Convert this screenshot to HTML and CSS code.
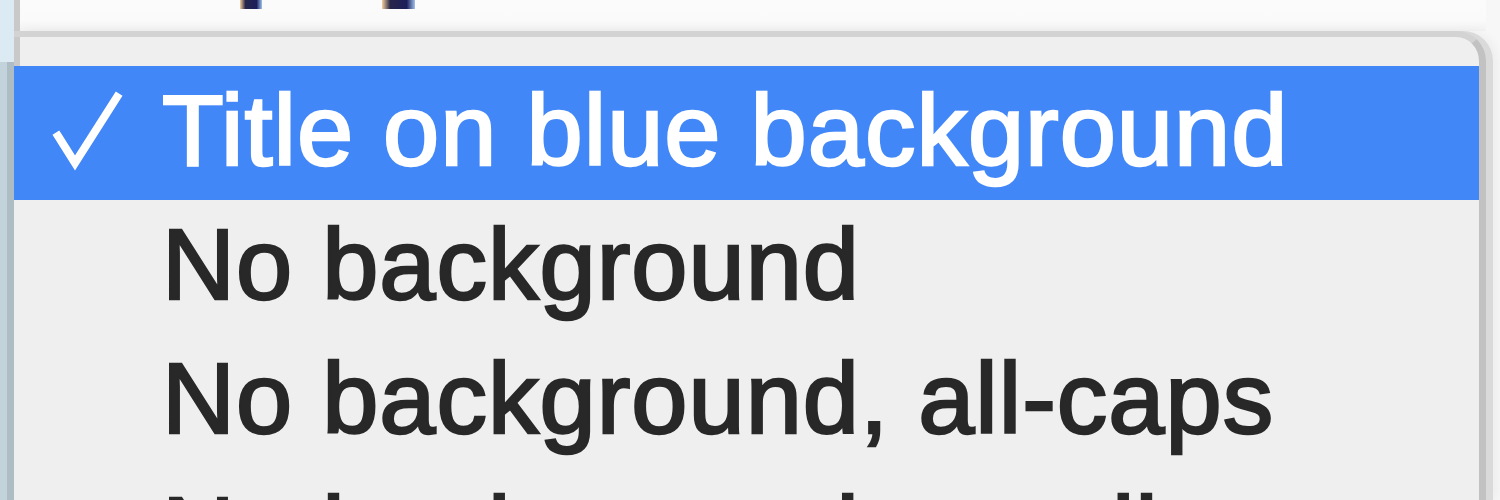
FILE: index.html
```html
<!DOCTYPE html>
<html lang="en">

<head>
    <meta charset="UTF-8">
    <meta name="viewport" content="width=device-width, initial-scale=1.0">
    <title>Header style menu</title>

    <link rel="stylesheet" href="styles.css">
</head>

<body>

    <div class="screen">
        <div class="window-edge"></div>

        <div class="panel">
            <!-- popup button the menu drops down from; only the glyph tails show -->
            <div class="field">
                <span class="tail tail-y"></span>
                <span class="tail tail-p"></span>
            </div>

            <div class="menu">
                <div class="menu-top"></div>

                <div class="item selected">
                    <span class="check">
                        <svg width="148" height="128" viewBox="0 0 148 128">
                            <path d="M44 70 L61 97 L103 31" fill="none" stroke="#fff" stroke-width="8"
                                stroke-linecap="square" stroke-linejoin="miter" />
                        </svg>
                    </span>
                    <span class="label">Title on blue background</span>
                </div>
                <div class="item">
                    <span class="check"></span>
                    <span class="label">No background</span>
                </div>
                <div class="item">
                    <span class="check"></span>
                    <span class="label">No background, all-caps</span>
                </div>
                <div class="item">
                    <span class="check"></span>
                    <span class="label">No background, small caps</span>
                </div>
            </div>
        </div>
    </div>

</body>

</html>
```

FILE: styles.css
```css
html,
body {
    margin: 0;
    padding: 0;
    height: 100%;
    overflow: hidden;
}

body {
    font-family: 'Liberation Sans', Arial, sans-serif;
    background-color: #f7f7f7;
}

.screen {
    display: flex;
    height: 500px;
}

/* window behind the menu, showing at the left */
.window-edge {
    width: 14px;
    flex-shrink: 0;
    background:
        linear-gradient(to bottom, #dcebf3 0, #dcebf3 62px, transparent 62px),
        linear-gradient(to right, #c2d3db 7px, #aebdc4 7px);
}

.panel {
    width: 1472px;
    display: flex;
    flex-direction: column;
}

.field {
    height: 31px;
    display: flex;
    border-left: 6px solid #c9c9c9;
    background: linear-gradient(to bottom, #fbfbfb 0, #fafafa 20px, #f1f1f1 31px);
}

.tail {
    display: block;
    height: 9px;
    background: linear-gradient(to right, #f3cf9c, #27264a 25%, #1c1f5a 75%, #9fc2ec);
}

.tail-y {
    width: 22px;
    margin-left: 220px;
}

.tail-p {
    width: 33px;
    margin-left: 120px;
}

.menu {
    flex: 1;
    background-color: #efefef;
    border-top: 6px solid #d3d3d3;
    border-right: 7px solid #c2c2c2;
    border-top-right-radius: 30px;
    box-shadow: 7px 0 0 #dadada, 12px 0 10px rgba(0, 0, 0, 0.04);
    overflow: hidden;
}

.menu-top {
    height: 29px;
    width: 6px;
    background-color: #c9c9c9;
}

.item {
    display: flex;
    height: 134px;
    line-height: 128px;
    padding-bottom: 6px;
    box-sizing: border-box;
    font-size: 101px;
    letter-spacing: 1px;
    color: #282828;
    -webkit-text-stroke: 2.5px currentColor;
    white-space: nowrap;
}

.item.selected {
    background-color: #4287f8;
    color: #ffffff;
}

.check {
    width: 148px;
    flex-shrink: 0;
    display: flex;
    align-items: flex-start;
}

.check svg {
    display: block;
}
```
